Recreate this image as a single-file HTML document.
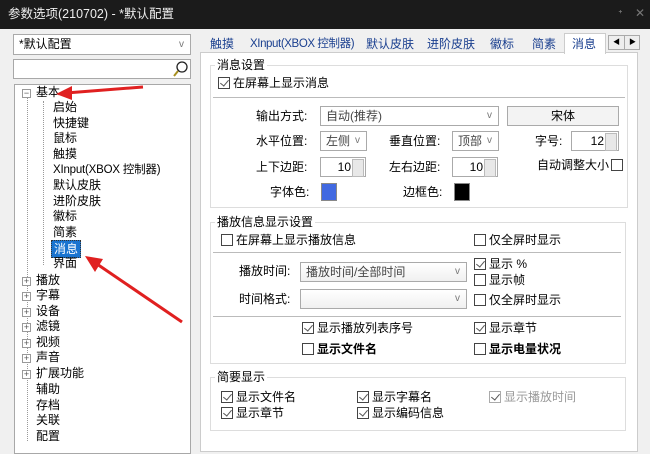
<!DOCTYPE html><html><head><meta charset="utf-8"><style>
*{box-sizing:border-box;margin:0;padding:0}
body{width:650px;height:447px;overflow:hidden;background:#f0f0f0;font-family:"Liberation Sans","Noto Sans CJK SC",sans-serif;font-size:12px;color:#000;position:relative}
.a{position:absolute;white-space:nowrap;line-height:14px}
.title{position:absolute;left:0;top:0;width:650px;height:29px;background:#1b1b1b;color:#eee}
.box{position:absolute;background:#fff;border:1px solid #a8a8a8}
.cb{display:inline-block;width:12px;height:12px;border:1px solid #444;background:#fff;vertical-align:-2px;margin-right:3px;position:relative}
.cb.c::after{content:"";position:absolute;left:3px;top:0px;width:4px;height:7px;border:solid #555;border-width:0 1px 1px 0;transform:rotate(40deg)}
.g .cb{border-color:#aaa}.g{color:#999}
.combo{position:absolute;background:#fff;border:1px solid #aaa;height:20px;line-height:18px;padding-left:5px;color:#444}
.combo::after{content:"v";position:absolute;right:6px;top:0;font-size:10px;color:#777}
.cmb2{background:linear-gradient(#fff,#f0f0f0)}
.spin{position:absolute;background:#fff;border:1px solid #aaa;height:20px;line-height:18px;text-align:right;padding-right:14px}
.spin::after{content:"";position:absolute;right:1px;top:1px;width:10px;height:16px;background:#e8e8e8;border:1px solid #bbb}
.grp{position:absolute;border:1px solid #ddd}
.gl{position:absolute;background:#fff;padding:0 2px;line-height:14px}
.sep{position:absolute;height:1px;background:#bbb}
.tree .a{font-size:12px}
.dot{position:absolute;border-left:1px dotted #999}
.ex{position:absolute;width:9px;height:9px;border:1px solid #999;background:#fff;font-size:9px;line-height:7px;text-align:center;color:#555}
.tab{color:#1a3f8f}
</style></head><body>
<div class="title"><span class="a" style="left:8px;top:7px;font-size:12.5px">参数选项(210702) - *默认配置</span><span class="a" style="left:618px;top:7px;color:#777">ᐩ</span><span class="a" style="left:635px;top:6px;color:#777">✕</span></div>
<div class="combo" style="left:13px;top:34px;width:178px;height:21px;color:#000;line-height:19px">*默认配置</div>
<div class="box" style="left:13px;top:59px;width:178px;height:20px"><svg width="16" height="18" style="position:absolute;right:2px;top:0"><circle cx="10" cy="7" r="5" fill="#fff" stroke="#222" stroke-width="1.3"/><line x1="6" y1="11" x2="2" y2="16" stroke="#a89020" stroke-width="2"/></svg></div>
<div class="box tree" style="left:14px;top:84px;width:177px;height:370px">
<div class="dot" style="left:12px;top:12px;height:344px"></div>
<div class="dot" style="left:28px;top:16px;height:164px"></div>
</div>
<div class="tree">
<div class="ex" style="left:22px;top:89px">−</div>
<span class="a" style="left:36px;top:85px">基本</span>
<span class="a" style="left:53px;top:100px">启始</span>
<span class="a" style="left:53px;top:116px">快捷键</span>
<span class="a" style="left:53px;top:131px">鼠标</span>
<span class="a" style="left:53px;top:147px">触摸</span>
<span class="a" style="left:53px;top:163px;font-size:11.5px;letter-spacing:-0.2px">XInput(XBOX 控制器)</span>
<span class="a" style="left:53px;top:178px">默认皮肤</span>
<span class="a" style="left:53px;top:194px">进阶皮肤</span>
<span class="a" style="left:53px;top:209px">徽标</span>
<span class="a" style="left:53px;top:225px">简素</span>
<span class="a" style="left:51px;top:240px;background:#1a74d0;color:#fff;padding:1px 2px;border:1px dotted #333">消息</span>
<span class="a" style="left:53px;top:256px">界面</span>
<div class="ex" style="left:22px;top:277px">+</div><span class="a" style="left:36px;top:273px">播放</span>
<div class="ex" style="left:22px;top:292px">+</div><span class="a" style="left:36px;top:288px">字幕</span>
<div class="ex" style="left:22px;top:308px">+</div><span class="a" style="left:36px;top:304px">设备</span>
<div class="ex" style="left:22px;top:323px">+</div><span class="a" style="left:36px;top:319px">滤镜</span>
<div class="ex" style="left:22px;top:339px">+</div><span class="a" style="left:36px;top:335px">视频</span>
<div class="ex" style="left:22px;top:354px">+</div><span class="a" style="left:36px;top:350px">声音</span>
<div class="ex" style="left:22px;top:370px">+</div><span class="a" style="left:36px;top:366px">扩展功能</span>
<span class="a" style="left:36px;top:382px">辅助</span>
<span class="a" style="left:36px;top:398px">存档</span>
<span class="a" style="left:36px;top:413px">关联</span>
<span class="a" style="left:36px;top:429px">配置</span>
</div>
<!-- tabs -->
<span class="a tab" style="left:210px;top:37px">触摸</span>
<span class="a tab" style="left:250px;top:37px;font-size:11.5px;letter-spacing:-0.4px">XInput(XBOX 控制器)</span>
<span class="a tab" style="left:366px;top:37px">默认皮肤</span>
<span class="a tab" style="left:427px;top:37px">进阶皮肤</span>
<span class="a tab" style="left:490px;top:37px">徽标</span>
<span class="a tab" style="left:532px;top:37px">简素</span>
<div style="position:absolute;left:200px;top:52px;width:438px;height:400px;background:#fff;border:1px solid #ccc"></div>
<div style="position:absolute;left:564px;top:33px;width:42px;height:21px;background:#fff;border:1px solid #ccc;border-bottom:none"></div>
<span class="a tab" style="left:572px;top:37px">消息</span>
<div style="position:absolute;left:608px;top:35px;width:32px;height:15px;border:1px solid #aaa;background:#eee;font-size:7px;line-height:13px"><span style="position:absolute;left:4px">◀</span><span style="position:absolute;left:20px">▶</span><div style="position:absolute;left:15px;top:0;height:13px;border-left:1px solid #aaa"></div></div>
<!-- group 1 -->
<div class="grp" style="left:210px;top:65px;width:418px;height:143px"></div>
<span class="gl a" style="left:215px;top:58px">消息设置</span>
<span class="a" style="left:218px;top:76px"><i class="cb c"></i>在屏幕上显示消息</span>
<div class="sep" style="left:213px;top:97px;width:412px"></div>
<span class="a" style="left:256px;top:109px">输出方式:</span>
<div class="combo" style="left:320px;top:106px;width:179px">自动(推荐)</div>
<div style="position:absolute;left:507px;top:106px;width:112px;height:20px;border:1px solid #aaa;background:#f3f3f3;text-align:center;line-height:18px">宋体</div>
<span class="a" style="left:256px;top:134px">水平位置:</span>
<div class="combo" style="left:320px;top:131px;width:47px">左侧</div>
<span class="a" style="left:389px;top:134px">垂直位置:</span>
<div class="combo" style="left:452px;top:131px;width:47px">顶部</div>
<span class="a" style="left:535px;top:134px">字号:</span>
<div class="spin" style="left:571px;top:131px;width:48px">12</div>
<span class="a" style="left:256px;top:160px">上下边距:</span>
<div class="spin" style="left:320px;top:157px;width:46px">10</div>
<span class="a" style="left:389px;top:160px">左右边距:</span>
<div class="spin" style="left:452px;top:157px;width:46px">10</div>
<span class="a" style="left:537px;top:158px">自动调整大小<i class="cb" style="margin-left:2px;margin-right:0"></i></span>
<span class="a" style="left:270px;top:185px">字体色:</span>
<div style="position:absolute;left:321px;top:183px;width:16px;height:18px;background:#4169e1;border:1px solid #888"></div>
<span class="a" style="left:403px;top:185px">边框色:</span>
<div style="position:absolute;left:454px;top:183px;width:16px;height:18px;background:#000;border:1px solid #888"></div>
<!-- group 2 -->
<div class="grp" style="left:210px;top:222px;width:416px;height:142px"></div>
<span class="gl a" style="left:215px;top:215px">播放信息显示设置</span>
<span class="a" style="left:221px;top:233px"><i class="cb"></i>在屏幕上显示播放信息</span>
<span class="a" style="left:474px;top:233px"><i class="cb"></i>仅全屏时显示</span>
<div class="sep" style="left:213px;top:252px;width:408px"></div>
<span class="a" style="left:239px;top:264px">播放时间:</span>
<div class="combo cmb2" style="left:300px;top:262px;width:167px">播放时间/全部时间</div>
<span class="a" style="left:474px;top:257px"><i class="cb c"></i>显示 %</span>
<span class="a" style="left:474px;top:273px"><i class="cb"></i>显示帧</span>
<span class="a" style="left:239px;top:292px">时间格式:</span>
<div class="combo cmb2" style="left:300px;top:289px;width:167px"></div>
<span class="a" style="left:474px;top:293px"><i class="cb"></i>仅全屏时显示</span>
<div class="sep" style="left:213px;top:316px;width:408px"></div>
<span class="a" style="left:302px;top:321px"><i class="cb c"></i>显示播放列表序号</span>
<span class="a" style="left:474px;top:321px"><i class="cb c"></i>显示章节</span>
<span class="a" style="left:302px;top:342px;font-weight:bold"><i class="cb"></i>显示文件名</span>
<span class="a" style="left:474px;top:342px;font-weight:bold"><i class="cb"></i>显示电量状况</span>
<!-- group 3 -->
<div class="grp" style="left:210px;top:377px;width:416px;height:54px"></div>
<span class="gl a" style="left:215px;top:370px">简要显示</span>
<span class="a" style="left:221px;top:390px"><i class="cb c"></i>显示文件名</span>
<span class="a" style="left:357px;top:390px"><i class="cb c"></i>显示字幕名</span>
<span class="a g" style="left:489px;top:390px"><i class="cb c"></i>显示播放时间</span>
<span class="a" style="left:221px;top:406px"><i class="cb c"></i>显示章节</span>
<span class="a" style="left:357px;top:406px"><i class="cb c"></i>显示编码信息</span>
<!-- arrows -->
<svg width="650" height="447" style="position:absolute;left:0;top:0">
<g fill="#e02020" stroke="#e02020">
<line x1="143" y1="87" x2="66" y2="93" stroke-width="3"/>
<polygon points="56,94 72,86 72,100" stroke="none"/>
<line x1="182" y1="322" x2="94" y2="262" stroke-width="3"/>
<polygon points="85,256 103,259 95,272" stroke="none"/>
</g></svg>
</body></html>
